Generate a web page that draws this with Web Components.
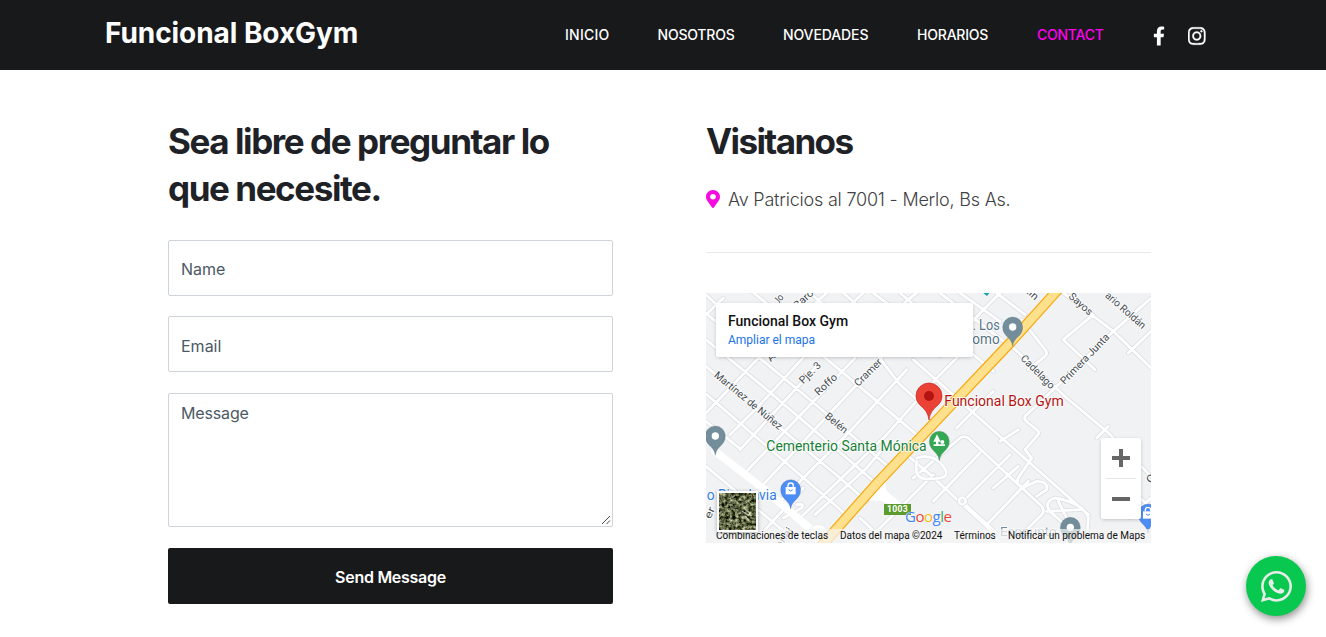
<!DOCTYPE html>
<html lang="es">
<head>
<meta charset="utf-8">
<title>Funcional BoxGym</title>
<style>
body{margin:0;background:#fff;font-family:Inter,"Liberation Sans",sans-serif;color:#1f2329;height:637px;overflow:hidden}
</style>
</head>
<body>
<gym-header></gym-header>
<gym-contact></gym-contact>
<whatsapp-button></whatsapp-button>
<script>
const define = (name, html) => customElements.define(name, class extends HTMLElement {
  constructor() {
    super();
    this.attachShadow({mode: "open"}).innerHTML = html;
  }
});

define("nav-link", `<style>
:host{display:block;width:var(--w);white-space:nowrap;font-size:14px;line-height:20px;font-weight:500;color:#fff;letter-spacing:var(--ls,-.2px)}
:host([active]){color:#f0e}
a{color:inherit;text-decoration:none}
</style><a><slot></slot></a>`);

define("gym-header", `<style>
:host{display:flex;height:70px;background:#18191b;color:#fff;box-sizing:border-box;padding-left:105px}
.brand{width:460px;font-weight:700;font-size:28px;line-height:34px;padding-top:16px;letter-spacing:-.06px}
nav{display:flex;gap:48px;padding-top:25px}
.social{display:flex;padding:26px 0 0 49px;gap:23px}
svg{display:block;fill:#fff}
</style>
<div class="brand">Funcional BoxGym</div>
<nav>
<nav-link style="--w:44.5px;--ls:.25px">INICIO</nav-link>
<nav-link style="--w:77.5px">NOSOTROS</nav-link>
<nav-link style="--w:86px;--ls:-.1px">NOVEDADES</nav-link>
<nav-link style="--w:72px">HORARIOS</nav-link>
<nav-link style="--w:67px;--ls:-.25px" active>CONTACT</nav-link>
</nav>
<div class="social">
<svg width="12" height="20" viewBox="0 0 320 512"><path d="M279.14 288l14.22-92.66h-88.91v-60.13c0-25.35 12.42-50.06 52.24-50.06h40.42V6.26S260.43 0 225.36 0c-73.22 0-121.08 44.38-121.08 124.72v70.62H22.89V288h81.39v224h100.17V288z"/></svg>
<svg width="17.5" height="20" viewBox="0 0 448 512"><path stroke="#fff" stroke-width="8" d="M224.1 141c-63.6 0-114.9 51.3-114.9 114.9s51.3 114.9 114.9 114.9S339 319.5 339 255.9 287.7 141 224.1 141zm0 189.6c-41.1 0-74.7-33.5-74.7-74.7s33.5-74.7 74.7-74.7 74.7 33.5 74.7 74.7-33.6 74.7-74.7 74.7zm146.4-194.3c0 14.9-12 26.8-26.8 26.8-14.9 0-26.8-12-26.8-26.8s12-26.8 26.8-26.8 26.8 12 26.8 26.8zm76.1 27.2c-1.7-35.9-9.9-67.7-36.2-93.9-26.2-26.2-58-34.4-93.9-36.2-37-2.1-147.9-2.1-184.9 0-35.8 1.7-67.6 9.9-93.9 36.1s-34.4 58-36.2 93.9c-2.1 37-2.1 147.9 0 184.9 1.7 35.9 9.9 67.7 36.2 93.9s58 34.4 93.9 36.2c37 2.1 147.9 2.1 184.9 0 35.9-1.7 67.7-9.9 93.9-36.2 26.2-26.2 34.4-58 36.2-93.9 2.1-37 2.1-147.8 0-184.8zM398.8 388c-7.8 19.6-22.9 34.7-42.6 42.6-29.5 11.7-99.5 9-132.1 9s-102.7 2.6-132.1-9c-19.6-7.8-34.7-22.9-42.6-42.6-11.7-29.5-9-99.5-9-132.1s-2.6-102.7 9-132.1c7.8-19.6 22.9-34.7 42.6-42.6 29.5-11.7 99.5-9 132.1-9s102.7-2.6 132.1 9c19.6 7.8 34.7 22.9 42.6 42.6 11.7 29.5 9 99.5 9 132.1s2.7 102.7-9 132.1z"/></svg>
</div>`);

define("form-field", `<style>
:host{display:block;box-sizing:border-box;height:56px;border:1px solid #ced4da;border-radius:2px;padding:16px 12px 0;font-size:16px;line-height:24px;color:#4c5965;position:relative}
:host([low]){padding-top:17px}
:host([multiline]){height:134px;padding-top:7px;letter-spacing:-.15px}
svg{display:none;position:absolute;right:1px;bottom:1px}
:host([multiline]) svg{display:block}
</style><slot></slot><svg width="10" height="10" viewBox="0 0 10 10"><path d="M1 9 9 1M5.500 9 9 5.500" stroke="#444" fill="none"/></svg>`);

define("contact-form", `<style>
:host{display:block;width:445px}
h2{margin:0;font-size:35px;line-height:47px;font-weight:700;letter-spacing:-1.42px;color:#1e2227;white-space:nowrap}
form{display:grid;margin-top:28px}
form-field{margin-bottom:20px}
form-field + form-field{margin-bottom:21px}
button{height:56px;border:0;border-radius:2px;background:#18191b;color:#fff;font:600 16px/24px Inter,sans-serif;letter-spacing:-.28px;padding:2px 0 0}
</style>
<h2>Sea libre de preguntar lo<br>que necesite.</h2>
<form><form-field>Name</form-field><form-field low>Email</form-field><form-field multiline>Message</form-field><button type="button">Send Message</button></form>`);

define("visit-info", `<style>
:host{display:block;width:445px}
h2{margin:0;font-size:35px;line-height:47px;font-weight:700;letter-spacing:-1.6px;color:#1e2227}
.address{display:flex;gap:8px;align-items:center;height:27px;margin-top:21px;font-size:18px;font-weight:300;color:#3f4144;letter-spacing:-.21px;white-space:nowrap}
hr{border:0;border-top:1px solid #e8e9ea;margin:39px 0 40px}
svg{display:block;position:relative;top:-1px}
</style>
<h2>Visitanos</h2>
<div class="address"><svg width="14" height="18" viewBox="0 0 384 512" preserveAspectRatio="none"><path fill="#f50ce0" d="M172.268 501.670C26.970 291.031 0 269.413 0 192 0 85.961 85.961 0 192 0s192 85.961 192 192c0 77.413-26.970 99.031-172.268 309.670-9.535 13.774-29.930 13.773-39.464 0zM192 272c44.183 0 80-35.817 80-80s-35.817-80-80-80-80 35.817-80 80 35.817 80 80 80z"/></svg><span>Av Patricios al 7001 - Merlo, Bs As.</span></div>
<hr>
<street-map></street-map>`);

define("gym-contact", `<style>
:host{display:flex;gap:93px;padding:48px 0 0 168px}
</style><contact-form></contact-form><visit-info></visit-info>`);

/* Street geometry; one unit is a third of a pixel. */
const streets = [
  /* north-west to south-east */
  "M150 5 240 80", "M18 20 60 60", "M18 76 338 342 570 540", "M18 155 180 288 545 600",
  "M18 235 142 337 420 570 500 640", "M18 318 450 690", "M18 400 120 482", "M18 535 270 745",
  "M210 65 368 203 650 440", "M330 15 500 160 600 290 690 370",
  "M430 15 550 120", "M520 15 700 150", "M600 15 880 250", "M720 15 925 170", "M640 215 1165 680",
  "M780 15 900 100", "M890 15 975 80",
  /* south-west to north-east */
  "M18 80 70 30", "M18 375 290 90", "M90 440 180 350 410 100",
  "M120 485 350 235", "M130 560 465 210", "M180 600 545 210", "M240 640 450 430 620 245",
  "M300 690 560 440 720 260 800 180", "M195 725 310 600", "M345 680 500 540 550 480",
  "M330 60 380 15", "M440 60 490 15", "M600 55 650 15", "M720 205 850 65 900 15",
  /* eastern side of the avenue */
  "M935 175 1100 330 1220 430 1353 565", "M1090 15 1240 130 1353 240",
  "M1353 30 1240 130 1065 300 975 385Q970 395 985 405L1010 425Q1022 435 1010 445L975 485 995 510",
  "M1180 80 1090 155 1185 245", "M1285 195 1353 130", "M965 95 1035 185Q1045 195 1035 205L985 245",
  "M770 420 880 310", "M640 570 780 450Q790 442 805 450L1025 655Q1035 670 1025 680L970 735",
  "M700 640 840 495", "M790 640 930 500", "M785 640 890 735", "M860 710 985 580",
  "M620 500 690 560 860 715 900 765", "M880 600 955 535", "M900 460 955 425", "M1190 450 1225 415",
  "M995 510 955 570Q945 590 970 598L1010 580Q1045 580 1040 605L1010 625",
  "M1160 765 1165 690Q1150 645 1065 630Q1030 640 1050 670L1105 720", "M1075 640 1100 690M1040 670 1140 665",
  "M530 730 650 610 700 560", "M480 690 560 765", "M1210 530 1353 660M1290 690 1353 630",
  "M250 690 305 660Q315 645 290 650",
].join("");

const pin = (x, y, color, inner) => `<g transform="translate(${x} ${y + 1})"><path d="M0 58C-4 28-30 30-30 0A30 30 0 0 1 30 0C30 30 4 28 0 58Z" fill="${color}" stroke="#49606b" stroke-opacity=".5" stroke-width="1.500"/>${inner}</g>`;
const hole = `<circle r="11" fill="#fff"/>`;
const bag = `<path d="M-15-8h30v22h-30z" fill="#fff"/><path d="M-8-8v-4a8 8 0 0 1 16 0v4" fill="none" stroke="#fff" stroke-width="4"/><path d="M-6 0q6 8 12 0" fill="none" stroke="#4d8df6" stroke-width="3"/>`;
const label = (x, y, size, len, text, extra = "") => `<text x="${x}" y="${y}" font-size="${size}" textLength="${len}" lengthAdjust="spacingAndGlyphs" ${extra}>${text}</text>`;
const road = (x, y, angle, len, text) => `<text transform="translate(${x} ${y}) rotate(${angle})" font-size="31" textLength="${len}" lengthAdjust="spacingAndGlyphs" fill="#444b51" dy="10">${text}</text>`;

define("street-map", `<style>
:host{display:block;position:relative;width:445px;height:250px;overflow:hidden;font-family:Roboto,sans-serif}
svg{display:block}
.canvas text{stroke:#fff;stroke-width:5px;stroke-linejoin:round;paint-order:stroke}
.card{position:absolute;left:10px;top:10px;width:257px;height:54px;box-sizing:border-box;padding:10px 12px;background:#fff;border-radius:2px;box-shadow:0 1px 4px -1px rgba(0,0,0,.3)}
.card b{display:block;font-size:14px;line-height:17px;font-weight:500;color:#111;letter-spacing:0}
.card a{display:block;font-size:12px;line-height:15px;color:#1a73e8;margin-top:3px}
.sat{position:absolute;left:11px;top:198px;width:37px;height:37px;border:2px solid #fff;box-shadow:0 1px 4px rgba(0,0,0,.3)}
.zoom{position:absolute;left:395px;top:145px;width:40px;height:81px;background:#fff;border-radius:2px;box-shadow:0 1px 4px -1px rgba(0,0,0,.3)}
.legal{position:absolute;left:0;right:0;bottom:0;height:14px;display:flex;background:linear-gradient(90deg,transparent,rgba(245,245,245,.7) 16px);font-size:10px;line-height:14px;color:#111;padding-left:10px;white-space:nowrap}
.legal span:nth-child(1){width:124px}.legal span:nth-child(2){width:114px}.legal span:nth-child(3){width:54px}
.google{position:absolute;left:199px;top:213px;font:500 15px/20px "Open Sans",sans-serif;letter-spacing:-.5px;text-shadow:0 0 1px #fff,0 0 1px #fff}
</style>
<svg class="canvas" width="445" height="250" viewBox="18 15 1335 750">
<rect x="18" y="15" width="1335" height="750" fill="#f1f2f4"/>
<g fill="none" stroke-linejoin="round" stroke-linecap="round">
<path d="${streets}" stroke="#dadde1" stroke-width="13"/>
<path d="${streets}" stroke="#fff" stroke-width="8.500"/>
<path d="M45 490 200 610 345 735" stroke="#fff" stroke-width="23"/>
<circle cx="355" cy="738" r="29" fill="#fff" stroke="#e4e6e9" stroke-width="2"/>
<circle cx="787" cy="639" r="10" fill="#f1f2f4" stroke="#d9dce0" stroke-width="12"/><circle cx="787" cy="639" r="10" stroke="#fff" stroke-width="8"/>
<path d="M650 510Q700 495 730 535T690 572Q640 580 650 520" stroke="#dfe2e6" stroke-width="12"/><path d="M650 510Q700 495 730 535T690 572Q640 580 650 520" stroke="#fff" stroke-width="8"/>
<path d="M552 570 555 610 620 665 545 635 500 632Z" fill="#fff" stroke="#fff" stroke-width="8"/>
<path d="M1085-7 1065 15 930 165 715 392 527 590 372 765 350 790" stroke="#f5a80c" stroke-width="32"/>
<path d="M1085-7 1065 15 930 165 715 392 527 590 372 765 350 790" stroke="#ffe08c" stroke-width="25"/>
</g>
${road(284, 57, -42, 70, "Baro")}${road(226, 45, -50, 30, "Jo")}${road(205, 216, -45, 22, "A")}
${road(303, 282, -45, 78, "Pje. 3")}${road(349, 317, -43, 80, "Roffo")}${road(468, 290, -45, 103, "Cramer")}
${road(47, 257, 39.5, 254, "Martínez de Núñez")}${road(379, 380, 40, 78, "Belén")}
${road(983, 5, 42, 38, "tín")}${road(1111, 20, 42, 84, "Sayos")}${road(1220, 18, 41, 150, "ario Roldán")}
${road(967, 206, 45, 130, "Cadelago")}${road(1086, 284, -46, 197, "Primera Junta")}
${road(22, 690, -65, 35, "er")}${road(232, 777, -55, 68, "onaj")}${road(1344, 581, -45, 45, "Co")}
<path d="M850 15h18l-7 9z" fill="#129eaf"/>
<g fill="#567383">${label(818, 126, 42, 81, ". Los")}${label(817, 168, 42, 82, "omo")}${label(900, 744, 41, 170, "Ecopunto", 'opacity=".8"')}</g>
<g fill="#337ee8">${label(20, 636, 42, 210, "o Rivadavia")}</g>
${label(199, 489, 43, 481, "Cementerio Santa Mónica", 'fill="#188038"')}
${label(733, 354, 43, 358, "Funcional Box Gym", 'fill="#b31412"')}
${pin(938, 116, "#738e9a", hole)}${pin(46, 443, "#738e9a", hole)}${pin(1111, 717, "#738e9a", hole)}
${pin(272, 604, "#4d8df6", bag)}${pin(1344, 677, "#4d8df6", bag)}
${pin(718, 459, "#34a853", `<path d="M-7-21-18 1h8v8H-17v5H17V9H-3V1h7Z" fill="#fff"/><circle cx="9" cy="2" r="6" fill="#fff"/>`)}
<path d="M687 396C682 353 648 357 648 324A39 39 0 0 1 726 324C726 357 692 353 687 396Z" fill="#ea4335" stroke="#c5221f" stroke-width="2"/><circle cx="687" cy="324" r="15" fill="#b31412"/>
<path d="M552 648h81v33h-81z" fill="#5b9a2c"/><text x="561" y="673" font-size="26" font-weight="700" textLength="62" fill="#fff" style="stroke:none">1003</text>
</svg>
<div class="google"><span style="color:#4285f4">G</span><span style="color:#ea4335">o</span><span style="color:#fbbc04">o</span><span style="color:#4285f4">g</span><span style="color:#34a853">l</span><span style="color:#ea4335">e</span></div>
<div class="legal"><span>Combinaciones de teclas</span><span>Datos del mapa ©2024</span><span>Términos</span><span>Notificar un problema de Maps</span></div>
<div class="card"><b>Funcional Box Gym</b><a>Ampliar el mapa</a></div>
<div class="sat"><svg width="37" height="37"><filter id="g" x="0" y="0" width="1" height="1" color-interpolation-filters="sRGB"><feTurbulence type="fractalNoise" baseFrequency=".3" numOctaves="4" seed="8"/><feColorMatrix values="1.400 0 0 0 -.32 1.350 0 0 0 -.27 1.200 0 0 0 -.32 0 0 0 0 1"/></filter><rect width="37" height="37" filter="url(#g)"/><path d="m23 18 7 5m-4-7 5 4m-5 3 4 4" stroke="#d8d5c8" stroke-width="1.200" opacity=".8"/></svg></div>
<div class="zoom"><svg width="40" height="81"><path d="M11 20h18M20 11v18M11 61h18" stroke="#666" stroke-width="4"/><path d="M5 40.500h30" stroke="#e6e6e6"/></svg></div>`);

define("whatsapp-button", `<style>
:host{position:fixed;left:1246px;top:556px;width:60px;height:60px;border-radius:50%;background:#08c850;box-shadow:1px 3px 9px rgba(0,0,0,.45);display:grid;place-items:center}
svg{display:block}
</style><svg width="31" height="31" viewBox="0 32 448 448"><path fill="#e6ece8" d="M380.900 97.100C339 55.100 283.200 32 223.900 32c-122.400 0-222 99.600-222 222 0 39.100 10.200 77.300 29.600 111L0 480l117.700-30.900c32.400 17.700 68.900 27 106.100 27h.1c122.300 0 224.100-99.600 224.100-222 0-59.300-25.200-115-67.100-157zm-157 341.600c-33.200 0-65.700-8.900-94-25.700l-6.700-4-69.800 18.300L72 359.200l-4.400-7c-18.500-29.400-28.200-63.300-28.200-98.200 0-101.700 82.800-184.500 184.600-184.500 49.300 0 95.600 19.200 130.400 54.100 34.800 34.900 56.200 81.200 56.100 130.500 0 101.800-84.900 184.600-186.600 184.600zm101.200-138.200c-5.500-2.800-32.800-16.200-37.900-18-5.100-1.900-8.800-2.800-12.500 2.800-3.700 5.600-14.300 18-17.600 21.800-3.200 3.700-6.500 4.200-12 1.400-32.600-16.300-54-29.100-75.500-66-5.700-9.800 5.700-9.100 16.300-30.300 1.800-3.700.9-6.900-.5-9.700-1.400-2.800-12.500-30.100-17.100-41.200-4.500-10.800-9.100-9.300-12.500-9.500-3.200-.2-6.900-.2-10.600-.2-3.700 0-9.700 1.400-14.800 6.900-5.100 5.600-19.400 19-19.400 46.300 0 27.300 19.900 53.700 22.600 57.400 2.800 3.700 39.100 59.700 94.800 83.800 35.200 15.200 49 16.500 66.600 13.900 10.700-1.600 32.800-13.400 37.400-26.400 4.600-13 4.600-24.100 3.200-26.400-1.300-2.500-5-3.900-10.500-6.600z"/></svg>`);
</script>
</body>
</html>
